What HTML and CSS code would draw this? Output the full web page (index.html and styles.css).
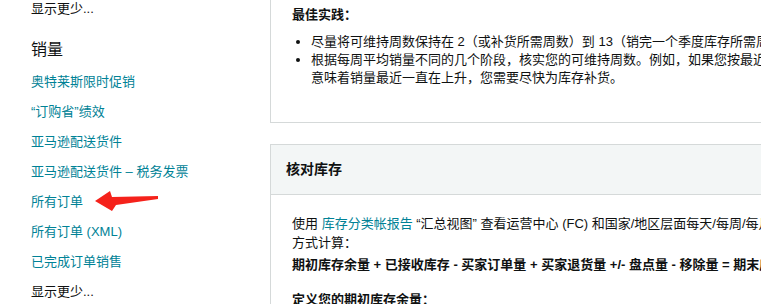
FILE: index.html
```html
<!DOCTYPE html>
<html lang="zh-CN">
<head>
    <meta charset="UTF-8">
    <meta name="viewport" content="width=device-width, initial-scale=1.0">
    <title>库存帮助</title>
    <link rel="stylesheet" href="styles.css">
</head>
<body>
    <div class="page">
        <div class="sidebar">
            <a class="side-link side-more" href="#">显示更少...</a>
            <h3 class="side-title">销量</h3>
            <a class="side-link" href="#">奥特莱斯限时促销</a>
            <a class="side-link" href="#">“订购省”绩效</a>
            <a class="side-link" href="#">亚马逊配送货件</a>
            <a class="side-link" href="#">亚马逊配送货件 – 税务发票</a>
            <a class="side-link" href="#">所有订单</a>
            <a class="side-link" href="#">所有订单 (XML)</a>
            <a class="side-link" href="#">已完成订单销售</a>
            <a class="side-link side-more" href="#">显示更少...</a>
        </div>

        <div class="main">
            <div class="card card-tips">
                <div class="card-body">
                    <p class="tips-title">最佳实践：</p>
                    <ul class="tips-list">
                        <li>尽量将可维持周数保持在 2（或补货所需周数）到 13（销完一个季度库存所需周数）之间。</li>
                        <li>根据每周平均销量不同的几个阶段，核实您的可维持周数。例如，如果您按最近一周计算的可维持周数较低，则<br>意味着销量最近一直在上升，您需要尽快为库存补货。</li>
                    </ul>
                </div>
            </div>

            <div class="card">
                <div class="card-header">核对库存</div>
                <div class="card-body card-body-main">
                    <p class="text">使用 <a class="link" href="#">库存分类帐报告</a> “汇总视图” 查看运营中心 (FC) 和国家/地区层面每天/每周/每月的库存变化。期末库存余量按以下<br>方式计算：</p>
                    <p class="formula">期初库存余量 + 已接收库存 - 买家订单量 + 买家退货量 +/- 盘点量 - 移除量 = 期末库存余量</p>
                    <p class="formula formula-next">定义您的期初库存余量：</p>
                </div>
            </div>
        </div>

        <svg class="arrow" width="70" height="26" viewBox="0 0 70 26">
            <polygon points="3,13 18,3 20,9 66,8 66,11 24,17 20,23" fill="#f5221b"/>
        </svg>
    </div>
</body>
</html>
```

FILE: styles.css
```css
body {
    margin: 0;
    padding: 0;
    background: #ffffff;
    color: #0f1111;
    font-family: "Liberation Sans", Arial, "Noto Sans CJK SC", sans-serif;
    font-size: 13px;
    overflow: hidden;
}

.page {
    position: relative;
    display: flex;
    width: 1000px;
    height: 304px;
    overflow: hidden;
}

/* left nav */
.sidebar {
    width: 239px;
    flex-shrink: 0;
    padding-left: 31px;
    margin-top: -6px;
    display: flex;
    flex-direction: column;
    align-items: flex-start;
}

.side-link {
    line-height: 30px;
    color: #008296;
    text-decoration: none;
    white-space: nowrap;
}

.side-more {
    color: #0f1111;
}

.side-title {
    margin: 14px 0 5px 0;
    font-size: 16px;
    font-weight: normal;
    line-height: 24px;
}

/* right content */
.main {
    flex: 1;
    display: flex;
    flex-direction: column;
    gap: 21px;
    margin-top: -15px;
}

.card {
    border: 1px solid #d5d9d9;
    border-right: none;
}

.card-tips {
    border-top: none;
}

.card-body {
    padding: 20px 0 35px 21px;
}

.tips-title {
    margin: 0;
    font-weight: bold;
    line-height: 20px;
}

.tips-list {
    margin: 8px 0 0 0;
    padding-left: 19px;
    line-height: 18px;
    white-space: nowrap;
}

.card-header {
    background-color: #f3f6f6;
    border-bottom: 1px solid #d5d9d9;
    padding: 14px 15px;
    line-height: 21px;
    font-size: 14px;
    font-weight: bold;
}

.card-body-main {
    padding-top: 19px;
}

.text {
    margin: 0;
    line-height: 19px;
    white-space: nowrap;
}

.link {
    color: #008296;
    text-decoration: none;
}

.formula {
    margin: 3px 0 0 0;
    line-height: 19px;
    font-weight: bold;
    white-space: nowrap;
}

.formula-next {
    margin-top: 16px;
}

.arrow {
    position: absolute;
    left: 92px;
    top: 188px;
}
```
